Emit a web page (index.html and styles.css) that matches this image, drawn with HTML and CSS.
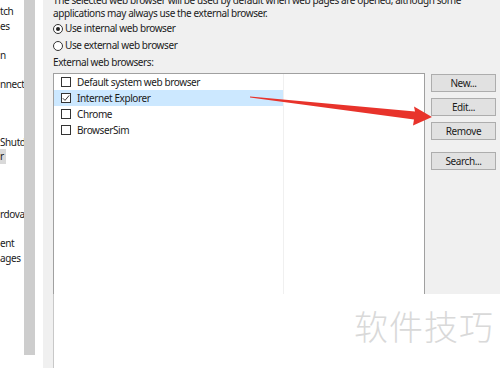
FILE: index.html
```html
<!DOCTYPE html>
<html>
<head>
	<meta charset="utf-8">
	<title>Web Browser</title>
	<link rel="stylesheet" href="styles.css">
</head>
<body>
	<div class="nav">
		<div class="nav-row">tch</div>
		<div class="nav-row">es</div>
		<div class="nav-row"></div>
		<div class="nav-row">n</div>
		<div class="nav-row"></div>
		<div class="nav-row">nnecti</div>
		<div class="nav-row"></div>
		<div class="nav-row"></div>
		<div class="nav-row"></div>
		<div class="nav-row">Shutd</div>
		<div class="nav-row"><span class="nav-sel">r</span></div>
		<div class="nav-row"></div>
		<div class="nav-row"></div>
		<div class="nav-row"></div>
		<div class="nav-row">rdova</div>
		<div class="nav-row"></div>
		<div class="nav-row">ent</div>
		<div class="nav-row">ages</div>
	</div>
	<div class="scroll"><div class="scroll-thumb"></div></div>
	<div class="gap"></div>
	<div class="pane">
		<div class="desc">The selected web browser will be used by default when web pages are opened, although some<br>applications may always use the external browser.</div>
		<div class="radio-row"><span class="radio checked"></span>Use internal web browser</div>
		<div class="radio-row"><span class="radio"></span>Use external web browser</div>
		<div class="label-row">External web browsers:</div>
		<div class="browser-area">
			<div class="list">
				<div class="item"><span class="check"></span>Default system web browser</div>
				<div class="item selected"><span class="check">
					<svg width="8" height="8" viewBox="0 0 8 8"><path d="M0.8 4.2 L3 6.4 L7.2 1.4" fill="none" stroke="#333" stroke-width="1"/></svg>
				</span>Internet Explorer</div>
				<div class="item"><span class="check"></span>Chrome</div>
				<div class="item"><span class="check"></span>BrowserSim</div>
			</div>
			<div class="buttons">
				<button class="btn">New...</button>
				<button class="btn">Edit...</button>
				<button class="btn">Remove</button>
				<button class="btn btn-gap">Search...</button>
			</div>
		</div>
		<div class="blank"></div>
	</div>

	<svg class="arrow" width="500" height="368" viewBox="0 0 500 368">
		<polygon points="250,96.5 415,111.5 414,106.5 432,117 413,125.5 414,119.5 250,97.5" fill="#e8332b"/>
	</svg>
	<div class="watermark">软件技巧</div>
</body>
</html>
```

FILE: styles.css
```css
body {
	margin: 0;
	width: 500px;
	height: 368px;
	overflow: hidden;
	display: flex;
	position: relative;
	font-family: "Noto Sans", "Noto Sans CJK SC", sans-serif;
	font-size: 10px;
	letter-spacing: -0.4px;
	color: #1b1b1b;
	background: #fff;
}
.nav {
	width: 24px;
	padding-top: 4px;
	overflow: hidden;
	white-space: nowrap;
	background: #fff;
}
.nav-row {
	height: 14.5px;
	line-height: 14.5px;
}
.nav-sel {
	display: inline-block;
	background: #d9d9d9;
	padding-right: 2px;
}
.scroll {
	width: 11px;
	background: #fff;
}
.scroll-thumb {
	height: 355px;
	background: #cdcdcd;
}
.gap {
	width: 8px;
	background: #fff;
}
.pane {
	flex: 1;
	display: flex;
	flex-direction: column;
	padding-left: 10px;
	background: #f0f0f0;
}
.desc {
	margin-top: -6px;
	line-height: 13px;
	height: 26px;
	white-space: nowrap;
}
.radio-row, .label-row {
	height: 17px;
	line-height: 17px;
	display: flex;
	align-items: center;
	white-space: nowrap;
}
.radio {
	width: 8px;
	height: 8px;
	border: 1px solid #333;
	border-radius: 50%;
	margin-right: 2px;
	display: flex;
	align-items: center;
	justify-content: center;
	background: #fff;
}
.radio.checked::after {
	content: "";
	width: 4px;
	height: 4px;
	border-radius: 50%;
	background: #222;
}
.label-row {
	margin-bottom: 2px;
}
.browser-area {
	display: flex;
	gap: 6px;
	height: 221px;
	background: #f0f0f0;
}
.list {
	width: 370px;
	border: 1px solid #a0a0a0;
	border-bottom: none;
	background: #fff;
	background-image: linear-gradient(#f0f0f0, #f0f0f0);
	background-size: 1px 100%;
	background-position: 229px 0;
	background-repeat: no-repeat;
}
.item {
	height: 16px;
	width: 229px;
	display: flex;
	align-items: center;
	white-space: nowrap;
}
.item.selected {
	background: #cce8ff;
}
.check {
	width: 8px;
	height: 8px;
	border: 1px solid #333;
	margin-left: 7px;
	margin-right: 6px;
	background: #fff;
	display: flex;
	align-items: center;
	justify-content: center;
}
.check svg {
	display: block;
}
.buttons {
	width: 65px;
	display: flex;
	flex-direction: column;
	gap: 6px;
	padding-top: 1px;
}
.btn {
	height: 18px;
	padding: 0;
	font-family: inherit;
	font-size: 10px;
	letter-spacing: -0.4px;
	color: #1b1b1b;
	background: #e1e1e1;
	border: 1px solid #adadad;
}
.btn-gap {
	margin-top: 6px;
}
.blank {
	flex: 1;
	background: #fff;
	border-left: 1px solid #c8c8c8;
}
.arrow {
	position: absolute;
	left: 0;
	top: 0;
}
.watermark {
	position: absolute;
	left: 354px;
	top: 306px;
	font-family: "Noto Sans CJK SC", sans-serif;
	font-weight: 300;
	font-size: 34px;
	line-height: 40px;
	letter-spacing: 1px;
	color: #d9d9d9;
}
```
